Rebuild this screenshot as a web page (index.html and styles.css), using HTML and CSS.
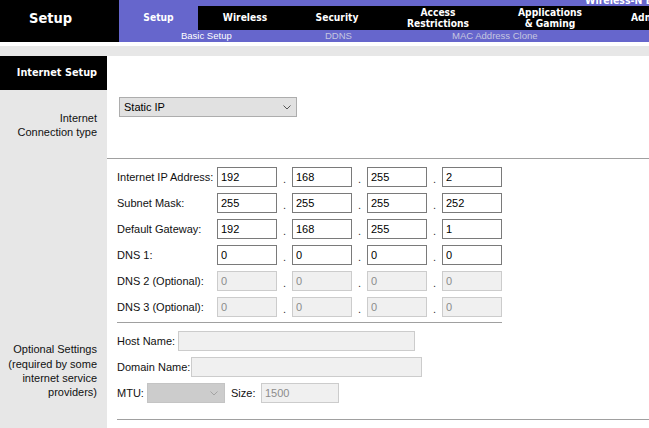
FILE: index.html
```html
<!DOCTYPE html>
<html>
<head>
<meta charset="utf-8">
<title>Setup</title>
<link rel="stylesheet" href="styles.css">
</head>
<body>
<div class="page">
  <header class="top">
    <div class="brand">Setup</div>
    <div class="nav">
      <div class="model"><span>Wireless-N Broadband Router</span></div>
      <div class="tabs">
        <div class="tab tab-setup active">Setup</div>
        <div class="tab tab-wireless">Wireless</div>
        <div class="tab tab-security">Security</div>
        <div class="tab tab-access">Access<br>Restrictions</div>
        <div class="tab tab-apps">Applications<br>&amp; Gaming</div>
        <div class="tab tab-admin">Administration</div>
      </div>
      <div class="subtabs">
        <span class="sub sub-basic current">Basic Setup</span>
        <span class="sub sub-ddns">DDNS</span>
        <span class="sub sub-mac">MAC Address Clone</span>
      </div>
    </div>
  </header>
  <div class="spacer"></div>
  <div class="greybar"></div>

  <main class="main">
    <section class="row">
      <div class="side side-head">Internet Setup</div>
      <div class="content"></div>
    </section>

    <section class="row">
      <div class="side">Internet<br>Connection type</div>
      <div class="content content-type">
        <div class="select select-type">
          <span>Static IP</span>
          <svg class="chev" width="8" height="5" viewBox="0 0 8 5"><polyline points="0.5,0.5 4,4 7.5,0.5" fill="none" stroke="#555" stroke-width="1"/></svg>
        </div>
      </div>
    </section>

    <section class="row">
      <div class="side"></div>
      <div class="content content-ip">
        <div class="ipgrid">
          <span class="lbl">Internet IP Address:</span>
          <input class="oct" value="192"><span class="dot">.</span><input class="oct" value="168"><span class="dot">.</span><input class="oct" value="255"><span class="dot">.</span><input class="oct" value="2">

          <span class="lbl">Subnet Mask:</span>
          <input class="oct" value="255"><span class="dot">.</span><input class="oct" value="255"><span class="dot">.</span><input class="oct" value="255"><span class="dot">.</span><input class="oct" value="252">

          <span class="lbl">Default Gateway:</span>
          <input class="oct" value="192"><span class="dot">.</span><input class="oct" value="168"><span class="dot">.</span><input class="oct" value="255"><span class="dot">.</span><input class="oct" value="1">

          <span class="lbl">DNS 1:</span>
          <input class="oct" value="0"><span class="dot">.</span><input class="oct" value="0"><span class="dot">.</span><input class="oct" value="0"><span class="dot">.</span><input class="oct" value="0">

          <span class="lbl">DNS 2 (Optional):</span>
          <input class="oct" value="0" disabled><span class="dot">.</span><input class="oct" value="0" disabled><span class="dot">.</span><input class="oct" value="0" disabled><span class="dot">.</span><input class="oct" value="0" disabled>

          <span class="lbl">DNS 3 (Optional):</span>
          <input class="oct" value="0" disabled><span class="dot">.</span><input class="oct" value="0" disabled><span class="dot">.</span><input class="oct" value="0" disabled><span class="dot">.</span><input class="oct" value="0" disabled>
        </div>
      </div>
    </section>

    <section class="row">
      <div class="side side-opt">Optional Settings<br>(required by some<br>internet service<br>providers)</div>
      <div class="content content-opt">
        <div class="optrow">
          <span class="olbl olbl-host">Host Name:</span>
          <input class="txt txt-host" disabled>
        </div>
        <div class="optrow">
          <span class="olbl olbl-domain">Domain Name:</span>
          <input class="txt txt-domain" disabled>
        </div>
        <div class="optrow">
          <span class="olbl olbl-mtu">MTU:</span>
          <div class="select select-mtu">
            <span></span>
            <svg class="chev" width="8" height="5" viewBox="0 0 8 5"><polyline points="0.5,0.5 4,4 7.5,0.5" fill="none" stroke="#a3a3a3" stroke-width="1"/></svg>
          </div>
          <span class="olbl olbl-size">Size:</span>
          <input class="txt txt-size" value="1500" disabled>
        </div>
      </div>
    </section>

    <section class="row row-last">
      <div class="side"></div>
      <div class="content content-last"></div>
    </section>
  </main>
</div>
</body>
</html>
```

FILE: styles.css
```css
html, body {
  margin: 0;
  padding: 0;
  background: #fff;
}
body {
  font-family: "Liberation Sans", Arial, sans-serif;
  font-size: 11px;
  color: #000;
}
.page {
  width: 649px;
  height: 428px;
  overflow: hidden;
  display: flex;
  flex-direction: column;
}

/* header */
.top {
  display: flex;
  height: 42px;
  flex: none;
}
.brand {
  width: 119px;
  flex: none;
  box-sizing: border-box;
  background: #000;
  color: #fff;
  font-family: "DejaVu Sans Condensed", "DejaVu Sans", sans-serif;
  font-weight: bold;
  font-size: 14.5px;
  line-height: 20px;
  padding: 8px 0 0 29px;
}
.nav {
  flex: 1;
  min-width: 0;
  background: #6666cc;
  display: flex;
  flex-direction: column;
  overflow: hidden;
}
.model {
  height: 6px;
  overflow: hidden;
  padding-left: 466px;
  white-space: nowrap;
}
.model span {
  display: block;
  color: #fff;
  font-family: "DejaVu Sans Condensed", "DejaVu Sans", sans-serif;
  font-weight: bold;
  font-size: 10.5px;
  line-height: 11px;
  margin-top: -5px;
}
.tabs {
  display: flex;
  height: 24px;
  background: #000;
  white-space: nowrap;
}
.tab {
  flex: none;
  display: flex;
  align-items: center;
  justify-content: center;
  text-align: center;
  color: #fff;
  font-family: "DejaVu Sans Condensed", "DejaVu Sans", sans-serif;
  font-weight: bold;
  font-size: 10.2px;
  line-height: 11.5px;
}
.tab.active { background: #6666cc; }
.tab-setup { width: 79px; }
.tab-wireless { width: 94px; }
.tab-security { width: 90px; }
.tab-access { width: 112px; }
.tab-apps { width: 112px; }
.tab-admin { width: 140px; justify-content: flex-start; padding-left: 25px; }

.subtabs {
  height: 12px;
  display: flex;
  padding-left: 62px;
  font-size: 9.5px;
  line-height: 12px;
  color: #c6c6e0;
  white-space: nowrap;
}
.sub { flex: none; }
.sub.current { color: #fff; }
.sub-basic { width: 144px; }
.sub-ddns { width: 127px; }

.spacer { height: 4px; flex: none; }
.greybar { height: 10px; background: #e7e7e7; flex: none; }

/* main */
.main {
  flex: 1;
  display: flex;
  flex-direction: column;
}
.row {
  display: flex;
  flex: none;
}
.row-last { flex: 1; }
.side {
  width: 107px;
  flex: none;
  box-sizing: border-box;
  background: #e7e7e7;
  padding-right: 10px;
  display: flex;
  align-items: center;
  justify-content: flex-end;
  text-align: right;
  line-height: 14px;
  color: #111;
}
.side-head {
  height: 34px;
  background: #000;
  color: #fff;
  font-family: "DejaVu Sans Condensed", "DejaVu Sans", sans-serif;
  font-weight: bold;
  font-size: 10.8px;
}
.side-opt { line-height: 14.3px; }
.content {
  flex: 1;
  min-width: 0;
}

.content-type {
  box-sizing: border-box;
  height: 69px;
  border-bottom: 1px solid #a0a0a0;
  padding: 7px 0 0 12px;
}
.select {
  box-sizing: border-box;
  height: 20px;
  display: flex;
  align-items: center;
  justify-content: space-between;
  border: 1px solid #adadad;
  background: #e1e1e1;
  padding: 0 5px 0 4px;
}
.select-type { width: 178px; }
.select-mtu {
  width: 78px;
  background: #cccccc;
  border-color: #c4c4c4;
  padding-right: 6px;
}

.content-ip {
  padding: 8px 0 0 10px;
}
.ipgrid {
  width: 385px;
  display: grid;
  grid-template-columns: 100px 60px 15px 60px 15px 60px 15px 60px;
  grid-auto-rows: 20px;
  row-gap: 6px;
  align-items: center;
  padding-bottom: 5px;
  border-bottom: 1px solid #a0a0a0;
}
.lbl { white-space: nowrap; color: #111; }
.dot {
  text-align: center;
  align-self: end;
  line-height: 16px;
  color: #333;
}
input {
  font-family: "Liberation Sans", Arial, sans-serif;
  font-size: 11px;
  box-sizing: border-box;
  height: 20px;
  margin: 0;
  padding: 0 3px;
  border: 1px solid #7a7a7a;
  background: #fff;
  color: #000;
  outline: none;
}
input:disabled {
  border-color: #cccccc;
  background: #f0f0f0;
  color: #8c8c8c;
}
.oct { width: 60px; }

.content-opt {
  padding: 8px 0 16px 10px;
  display: flex;
  flex-direction: column;
  gap: 6px;
}
.optrow {
  display: flex;
  align-items: center;
  height: 20px;
  white-space: nowrap;
  color: #111;
}
.olbl { flex: none; }
.olbl-host { width: 61px; }
.olbl-domain { width: 74px; }
.olbl-mtu { width: 30px; }
.olbl-size { width: 30px; margin-left: 6px; }
.txt-host { width: 237px; }
.txt-domain { width: 231px; }
.txt-size { width: 78px; }

.content-last {
  margin-left: 10px;
  border-top: 1px solid #a0a0a0;
}
```
